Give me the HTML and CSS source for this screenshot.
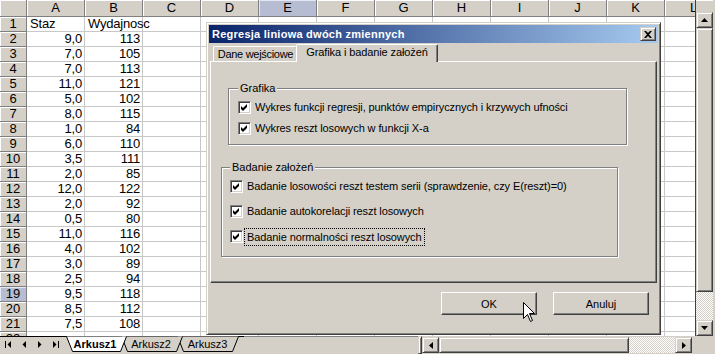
FILE: index.html
```html
<!DOCTYPE html>
<html lang="pl">
<head>
<meta charset="utf-8">
<title>Regresja liniowa dwóch zmiennych</title>
<link rel="stylesheet" href="styles.css">
</head>
<body>
<div class="window">
  <div class="main">
    <div class="grid">
      <div class="ch corner"></div>
      <div class="ch">A</div><div class="ch">B</div><div class="ch">C</div><div class="ch">D</div>
      <div class="ch sel">E</div><div class="ch">F</div><div class="ch">G</div><div class="ch">H</div>
      <div class="ch">I</div><div class="ch">J</div><div class="ch">K</div><div class="ch">L</div>

      <div class="rh">1</div><div class="c">Staz</div><div class="c">Wydajnosc</div>
      <div class="rh">2</div><div class="c n">9,0</div><div class="c n">113</div>
      <div class="rh">3</div><div class="c n">7,0</div><div class="c n">105</div>
      <div class="rh">4</div><div class="c n">7,0</div><div class="c n">113</div>
      <div class="rh">5</div><div class="c n">11,0</div><div class="c n">121</div>
      <div class="rh">6</div><div class="c n">5,0</div><div class="c n">102</div>
      <div class="rh">7</div><div class="c n">8,0</div><div class="c n">115</div>
      <div class="rh">8</div><div class="c n">1,0</div><div class="c n">84</div>
      <div class="rh">9</div><div class="c n">6,0</div><div class="c n">110</div>
      <div class="rh">10</div><div class="c n">3,5</div><div class="c n">111</div>
      <div class="rh">11</div><div class="c n">2,0</div><div class="c n">85</div>
      <div class="rh">12</div><div class="c n">12,0</div><div class="c n">122</div>
      <div class="rh">13</div><div class="c n">2,0</div><div class="c n">92</div>
      <div class="rh">14</div><div class="c n">0,5</div><div class="c n">80</div>
      <div class="rh">15</div><div class="c n">11,0</div><div class="c n">116</div>
      <div class="rh">16</div><div class="c n">4,0</div><div class="c n">102</div>
      <div class="rh">17</div><div class="c n">3,0</div><div class="c n">89</div>
      <div class="rh">18</div><div class="c n">2,5</div><div class="c n">94</div>
      <div class="rh sel">19</div><div class="c n">9,5</div><div class="c n">118</div>
      <div class="rh">20</div><div class="c n">8,5</div><div class="c n">112</div>
      <div class="rh">21</div><div class="c n">7,5</div><div class="c n">108</div>
      <div class="rh">22</div>
    </div>
    <div class="vscroll">
      <div class="vs-top"></div>
      <div class="raised sb-btn"><svg width="7" height="4" viewBox="0 0 7 4"><path d="M3.5 0 L7 4 L0 4 Z" fill="#000"/></svg></div>
      <div class="raised vs-thumb"></div>
      <div class="track"></div>
      <div class="raised sb-btn"><svg width="7" height="4" viewBox="0 0 7 4"><path d="M0 0 L7 0 L3.5 4 Z" fill="#000"/></svg></div>
    </div>
  </div>

  <div class="bottom">
    <div class="nav">
      <span class="navbtn"><svg width="6" height="7" viewBox="0 0 6 7"><rect x="0" y="0" width="1" height="7" fill="#000"/><path d="M6 0 L6 7 L2.5 3.5 Z" fill="#000"/></svg></span>
      <span class="navbtn"><svg width="4" height="7" viewBox="0 0 4 7"><path d="M4 0 L4 7 L0.5 3.5 Z" fill="#000"/></svg></span>
      <span class="navbtn"><svg width="4" height="7" viewBox="0 0 4 7"><path d="M0 0 L0 7 L3.5 3.5 Z" fill="#000"/></svg></span>
      <span class="navbtn"><svg width="6" height="7" viewBox="0 0 6 7"><path d="M0 0 L0 7 L3.5 3.5 Z" fill="#000"/><rect x="5" y="0" width="1" height="7" fill="#000"/></svg></span>
    </div>
    <svg class="sheet-tabs" width="180" height="18" viewBox="0 0 180 18">
      <line x1="0" y1="0.5" x2="180" y2="0.5" stroke="#000"/>
      <path d="M113.5 0.5 L119.5 15.5 L168.5 15.5 L174.5 0.5" fill="#D4D0C8" stroke="#000"/>
      <path d="M57.5 0.5 L63.5 15.5 L112.5 15.5 L118.5 0.5" fill="#D4D0C8" stroke="#000"/>
      <path d="M2.5 0.5 L8.5 15.5 L56.5 15.5 L62.5 0.5 Z" fill="#fff" stroke="none"/>
      <path d="M2.5 0.5 L8.5 15.5 L56.5 15.5 L62.5 0.5" fill="none" stroke="#000"/>
      <text class="tab-text active" x="31" y="12" text-anchor="middle">Arkusz1</text>
      <text class="tab-text" x="87" y="12" text-anchor="middle">Arkusz2</text>
      <text class="tab-text" x="143.5" y="12" text-anchor="middle">Arkusz3</text>
    </svg>
    <div class="fill"></div>
    <div class="raised split"></div>
    <div class="hscroll">
      <div class="raised sb-btn h"><svg width="4" height="7" viewBox="0 0 4 7"><path d="M4 0 L4 7 L0 3.5 Z" fill="#000"/></svg></div>
      <div class="raised hs-thumb"></div>
      <div class="track"></div>
      <div class="raised sb-btn h"><svg width="4" height="7" viewBox="0 0 4 7"><path d="M0 0 L0 7 L4 3.5 Z" fill="#000"/></svg></div>
    </div>
    <div class="corner-box"></div>
  </div>

  <div class="dialog">
    <div class="titlebar">
      <span class="title">Regresja liniowa dwóch zmiennych</span>
      <span class="raised close"><svg width="8" height="7" viewBox="0 0 8 7"><path d="M0 0 H2 L4 2 L6 0 H8 L5 3.5 L8 7 H6 L4 5 L2 7 H0 L3 3.5 Z" fill="#000"/></svg></span>
    </div>
    <div class="tabrow">
      <div class="tab">Dane wejściowe</div>
      <div class="tab active">Grafika i badanie założeń</div>
    </div>
    <div class="panel">
      <div class="group g1">
        <div class="legend">Grafika</div>
        <div class="opts">
          <div class="opt"><span class="cb"><svg width="7" height="7" viewBox="0 0 7 7"><path d="M0 2 L2 4 L6 0 L6 3 L2 7 L0 5 Z" fill="#000"/></svg></span><span class="label">Wykres funkcji regresji, punktów empirycznych i krzywych ufności</span></div>
          <div class="opt"><span class="cb"><svg width="7" height="7" viewBox="0 0 7 7"><path d="M0 2 L2 4 L6 0 L6 3 L2 7 L0 5 Z" fill="#000"/></svg></span><span class="label">Wykres reszt losowych w funkcji X-a</span></div>
        </div>
      </div>
      <div class="group g2">
        <div class="legend">Badanie założeń</div>
        <div class="opts">
          <div class="opt"><span class="cb"><svg width="7" height="7" viewBox="0 0 7 7"><path d="M0 2 L2 4 L6 0 L6 3 L2 7 L0 5 Z" fill="#000"/></svg></span><span class="label">Badanie losowości reszt testem serii (sprawdzenie, czy E(reszt)=0)</span></div>
          <div class="opt"><span class="cb"><svg width="7" height="7" viewBox="0 0 7 7"><path d="M0 2 L2 4 L6 0 L6 3 L2 7 L0 5 Z" fill="#000"/></svg></span><span class="label">Badanie autokorelacji reszt losowych</span></div>
          <div class="opt"><span class="cb"><svg width="7" height="7" viewBox="0 0 7 7"><path d="M0 2 L2 4 L6 0 L6 3 L2 7 L0 5 Z" fill="#000"/></svg></span><span class="label focus">Badanie normalności reszt losowych</span></div>
        </div>
      </div>
    </div>
    <div class="actions">
      <button class="btn">OK</button>
      <button class="btn">Anuluj</button>
    </div>
  </div>

  <svg class="cursor" width="13" height="21" viewBox="0 0 13 21"><path d="M0.5 0.5 L0.5 16.5 L4.5 12.5 L7.5 19.5 L9.5 18.5 L6.5 11.5 L11.5 11.5 Z" fill="#fff" stroke="#000" stroke-linejoin="miter"/></svg>
</div>
</body>
</html>
```

FILE: styles.css
```css
* { box-sizing: border-box; }

body {
  margin: 0;
  font-family: "Liberation Sans", Arial, sans-serif;
  background: #D4D0C8;
}

.window {
  position: relative;
  width: 715px;
  height: 354px;
  overflow: hidden;
  background: #D4D0C8;
}

.main {
  display: flex;
  height: 336px;
}

/* spreadsheet grid */
.grid {
  width: 695px;
  height: 336px;
  overflow: hidden;
  display: grid;
  grid-template-columns: 27px repeat(12, 58px);
  grid-template-rows: 17px;
  grid-auto-rows: 15px;
  background-color: #fff;
  background-image:
    linear-gradient(to right, #C8C8C8 1px, transparent 1px),
    linear-gradient(to bottom, #C8C8C8 1px, transparent 1px);
  background-size: 58px 100%, 100% 15px;
  background-position: 26px 0, 0 16px;
  font-size: 13px;
  color: #000;
}

.ch, .rh {
  background: #D4D0C8;
  border-right: 1px solid #808080;
  border-bottom: 1px solid #808080;
  box-shadow: inset 1px 1px 0 #fff;
  text-align: center;
  font-size: 13px;
  color: #000;
}

.ch { line-height: 16px; }

.rh {
  grid-column: 1;
  line-height: 14px;
}

.ch.sel, .rh.sel {
  background: #B6BDD2;
  box-shadow: inset 1px 1px 0 #E4E8F2;
}

.c {
  padding: 0 3px;
  line-height: 14px;
  white-space: nowrap;
  letter-spacing: -0.2px;
}

.n { text-align: right; }

/* scrollbars */
.raised {
  background: #D4D0C8;
  border: 1px solid;
  border-color: #D4D0C8 #404040 #404040 #D4D0C8;
  box-shadow: inset 1px 1px 0 #fff, inset -1px -1px 0 #808080;
}

.vscroll {
  width: 18px;
  margin-right: 2px;
  display: flex;
  flex-direction: column;
  border-left: 1px solid #404040;
}

.vs-top {
  height: 12px;
  border-top: 1px solid #fff;
}

.sb-btn {
  height: 16px;
  display: flex;
  align-items: center;
  justify-content: center;
}

.sb-btn.h {
  width: 17px;
  height: 16px;
}

.vs-thumb { height: 264px; }

.track {
  flex: 1;
  background: repeating-conic-gradient(#fff 0 25%, #D4D0C8 0 50%) 0 0 / 2px 2px;
}

/* bottom bar */
.bottom {
  height: 18px;
  display: flex;
  background: #D4D0C8;
}

.nav {
  width: 64px;
  display: flex;
  border-top: 1px solid #000;
}

.navbtn {
  width: 16px;
  display: flex;
  align-items: center;
  justify-content: center;
  padding-bottom: 2px;
}

.sheet-tabs { display: block; }

.tab-text {
  font-family: "Liberation Sans", Arial, sans-serif;
  font-size: 11px;
  fill: #000;
}

.tab-text.active { font-weight: bold; }

.fill {
  flex: 1;
  border-top: 1px solid #808080;
}

.split {
  width: 4px;
  height: 18px;
}

.hscroll {
  width: 270px;
  height: 16px;
  margin-top: 1px;
  display: flex;
}

.hs-thumb { width: 190px; }

.corner-box { width: 23px; }

/* dialog window */
.dialog {
  position: absolute;
  left: 206px;
  top: 22px;
  width: 455px;
  height: 313px;
  background: #D4D0C8;
  border: 1px solid;
  border-color: #D4D0C8 #404040 #404040 #D4D0C8;
  box-shadow: inset 1px 1px 0 #fff, inset -1px -1px 0 #808080;
  padding: 2px;
  display: flex;
  flex-direction: column;
  font-size: 11px;
  color: #000;
}

.titlebar {
  height: 18px;
  display: flex;
  align-items: center;
  justify-content: space-between;
  background: linear-gradient(to right, #0A246A, #A6CAF0);
  padding-left: 3px;
}

.title {
  color: #fff;
  font-weight: bold;
  font-size: 11px;
  letter-spacing: 0.25px;
}

.close {
  width: 16px;
  height: 14px;
  margin-right: 2px;
  display: flex;
  align-items: center;
  justify-content: center;
}

.tabrow {
  display: flex;
  align-items: flex-end;
  height: 17px;
  margin-top: 1px;
  padding-left: 4px;
}

.tab {
  width: 85px;
  height: 15px;
  border: 1px solid;
  border-bottom: none;
  border-color: #fff #404040 transparent #fff;
  box-shadow: inset -1px 0 0 #808080;
  border-radius: 2px 2px 0 0;
  text-align: center;
  line-height: 14px;
  white-space: nowrap;
  letter-spacing: -0.3px;
}

.tab.active {
  width: 142px;
  height: 18px;
  margin-left: -2px;
  margin-bottom: -1px;
  position: relative;
  z-index: 1;
  background: #D4D0C8;
  line-height: 15px;
  letter-spacing: -0.1px;
}

.panel {
  margin: 0 1px;
  height: 222px;
  border: 1px solid;
  border-color: #fff #404040 #404040 #fff;
  box-shadow: inset -1px -1px 0 #808080;
  padding-top: 26px;
}

.group {
  border: 1px solid #808080;
  box-shadow: 1px 1px 0 #fff, inset 1px 1px 0 #fff;
}

.g1 {
  margin-left: 17px;
  width: 399px;
  padding: 0 0 9px 9px;
}

.g2 {
  margin: 22px 0 0 10px;
  width: 397px;
  padding: 0 0 13px 8px;
}

.legend {
  width: max-content;
  margin: -7px 0 0 0;
  padding: 0 2px;
  background: #D4D0C8;
  line-height: 13px;
}

.opts {
  display: flex;
  flex-direction: column;
  gap: 8px;
  margin-top: 6px;
}

.g2 .opts { gap: 12px; }

.opt {
  display: flex;
  align-items: center;
  height: 13px;
}

.cb {
  width: 13px;
  height: 13px;
  flex: none;
  background: #fff;
  border: 1px solid;
  border-color: #808080 #fff #fff #808080;
  box-shadow: inset 1px 1px 0 #404040, inset -1px -1px 0 #D4D0C8;
  display: flex;
  align-items: center;
  justify-content: center;
}

.label {
  margin-left: 4px;
  white-space: nowrap;
  line-height: 13px;
  letter-spacing: -0.1px;
}

.label.focus {
  margin-left: 1px;
  border: 1px dotted #000;
  padding: 0 2px;
  line-height: 16px;
}

.actions {
  display: flex;
  justify-content: flex-end;
  gap: 16px;
  padding: 9px 9px 0 0;
}

.btn {
  width: 96px;
  height: 23px;
  padding: 0;
  background: #D4D0C8;
  border: 1px solid;
  border-color: #fff #404040 #404040 #fff;
  box-shadow: inset -1px -1px 0 #808080;
  font-family: "Liberation Sans", Arial, sans-serif;
  font-size: 11px;
  color: #000;
}

.cursor {
  position: absolute;
  left: 523px;
  top: 302px;
}
```
